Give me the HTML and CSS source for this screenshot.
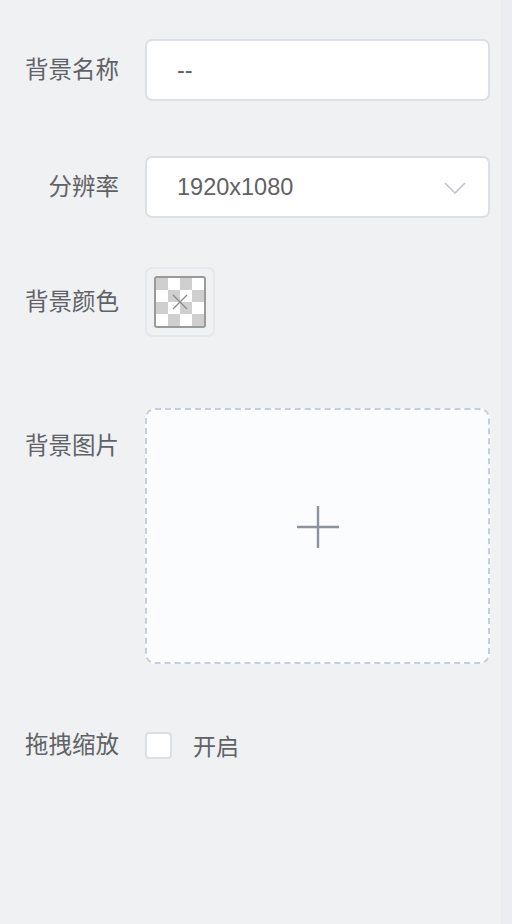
FILE: index.html
```html
<!DOCTYPE html>
<html lang="zh">
<head>
<meta charset="utf-8">
<link rel="stylesheet" href="styles.css">
</head>
<body>
<div class="page">
  <form class="form">
    <div class="row row-name">
      <label class="label">背景名称</label>
      <div class="field input"><span class="value">--</span></div>
    </div>
    <div class="row row-res">
      <label class="label">分辨率</label>
      <div class="field input select">
        <span class="value">1920x1080</span>
        <svg class="chevron" width="22" height="14" viewBox="0 0 22 14"><path d="M1 2 L11 12 L21 2" fill="none" stroke="#c0c4cc" stroke-width="1.6"/></svg>
      </div>
    </div>
    <div class="row row-color">
      <label class="label">背景颜色</label>
      <div class="picker">
        <div class="swatch">
          <svg width="48" height="48" viewBox="0 0 48 48">
            <rect x="0" y="0" width="12" height="12" fill="#cfcfcf"/>
            <rect x="24" y="0" width="12" height="12" fill="#cfcfcf"/>
            <rect x="12" y="12" width="12" height="12" fill="#cfcfcf"/>
            <rect x="36" y="12" width="12" height="12" fill="#cfcfcf"/>
            <rect x="0" y="24" width="12" height="12" fill="#cfcfcf"/>
            <rect x="24" y="24" width="12" height="12" fill="#cfcfcf"/>
            <rect x="12" y="36" width="12" height="12" fill="#cfcfcf"/>
            <rect x="36" y="36" width="12" height="12" fill="#cfcfcf"/>
            <path d="M17 17 L31 31 M31 17 L17 31" stroke="#8c8c8c" stroke-width="1.4"/>
          </svg>
        </div>
      </div>
    </div>
    <div class="row row-upload">
      <label class="label">背景图片</label>
      <div class="upload">
        <svg class="plus" width="44" height="44" viewBox="0 0 44 44"><path d="M22 1 V43 M1 22 H43" stroke="#8c939d" stroke-width="2.4"/></svg>
      </div>
    </div>
    <div class="row row-check">
      <label class="label">拖拽缩放</label>
      <div class="check">
        <span class="box"></span>
        <span class="check-text">开启</span>
      </div>
    </div>
  </form>
  <div class="scroll-strip"></div>
</div>
</body>
</html>
```
FILE: styles.css
```css
* { box-sizing: border-box; }
html, body { margin: 0; padding: 0; }
body {
  background: #f0f1f3;
  font-family: "Liberation Sans", "Noto Sans CJK SC", sans-serif;
  color: #606266;
}
.page {
  display: flex;
  width: 512px;
  height: 924px;
}
.form {
  flex: 1;
  display: flex;
  flex-direction: column;
  padding: 39px 11px 0 0;
}
.row {
  display: flex;
  align-items: center;
}
.label {
  width: 121px;
  padding-right: 2px;
  padding-bottom: 4px;
  text-align: right;
  font-size: 23.5px;
  color: #606266;
  flex: none;
}
.field {
  margin-left: 24px;
  flex: 1;
  height: 62px;
  background: #fff;
  border: 2px solid #dcdfe6;
  border-radius: 7px;
  display: flex;
  align-items: center;
  padding: 0 22px 0 30px;
}
.value {
  font-size: 23.5px;
  color: #606266;
  flex: 1;
}
.row-name { margin-bottom: 55px; }
.row-res { margin-bottom: 49px; }
.select .chevron { margin-top: 2px; }
.picker {
  margin-left: 24px;
  width: 70px;
  height: 70px;
  border: 2px solid #e4e7ed;
  border-radius: 7px;
  padding: 7px;
}
.swatch {
  width: 52px;
  height: 52px;
  border: 2px solid #9a9a9a;
  border-radius: 3px;
  background: #fff;
  overflow: hidden;
  display: flex;
}
.swatch svg { display: block; flex: none; width: 48px; height: 48px; }
.row-color { margin-bottom: 71px; }
.row-upload { align-items: flex-start; margin-bottom: 50px; }
.row-upload .label { margin-top: 19px; }
.upload {
  margin-left: 24px;
  flex: 1;
  height: 256px;
  border: 2px dashed #c5cfdc;
  border-radius: 10px;
  background: #fbfcfe;
  display: flex;
  align-items: center;
  justify-content: center;
}
.plus { margin-bottom: 18px; }
.row-check { height: 62px; }
.check {
  margin-left: 24px;
  display: flex;
  align-items: center;
}
.box {
  width: 27px;
  height: 27px;
  border: 2px solid #dcdfe6;
  border-radius: 4px;
  background: #fff;
}
.check-text {
  margin-left: 21px;
  font-size: 23px;
  color: #606266;
}
.scroll-strip {
  width: 11px;
  flex: none;
  background: #ecedf0;
  border-left: 1px solid #e9eaed;
}
```
